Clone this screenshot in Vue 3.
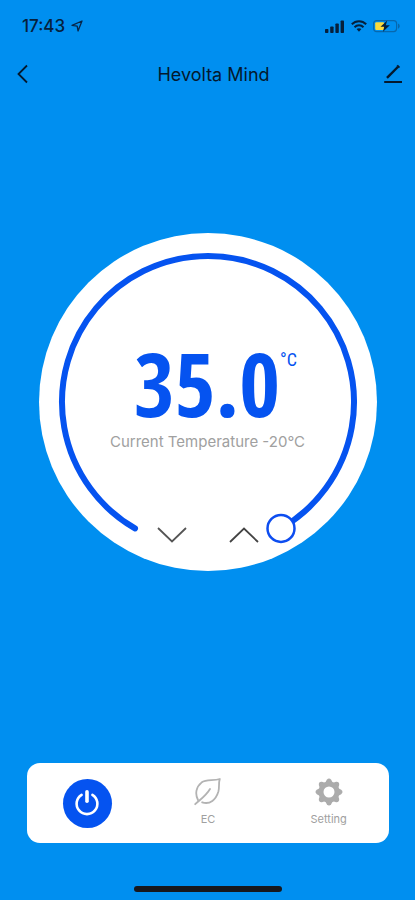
<template>
  <div class="screen">
    <header>
      <div class="status">
        <div class="clock">
          <span>17:43</span>
          <svg width="12" height="12" viewBox="0 0 12 12">
            <path d="M1 5.4L11 1L7 11L6.2 6.2Z" fill="none" stroke="#06264a" stroke-width="1.3" stroke-linejoin="round" />
          </svg>
        </div>
        <div class="indicators">
          <svg width="20" height="13" viewBox="0 0 20 13" fill="#06203c">
            <rect x="0" y="9" width="3.4" height="4" rx="0.8" />
            <rect x="5.2" y="6.5" width="3.4" height="6.5" rx="0.8" />
            <rect x="10.4" y="3.5" width="3.4" height="9.5" rx="0.8" />
            <rect x="15.6" y="0.5" width="3.4" height="12.5" rx="0.8" />
          </svg>
          <svg width="16" height="12" viewBox="0 0 16 12" fill="none" stroke="#06203c" stroke-width="2">
            <path d="M0.8 4.3C4.8 0.2 11.2 0.2 15.2 4.3" />
            <path d="M3.5 7.2C6 4.7 10 4.7 12.5 7.2" />
            <path d="M5.6 9.1C7 7.9 9 7.9 10.4 9.1L8 11.7Z" fill="#06203c" stroke="none" />
          </svg>
          <svg width="28" height="14" viewBox="0 0 28 14">
            <rect x="0.6" y="1.6" width="23" height="11" rx="3" fill="none" stroke="#0768ae" stroke-width="1.2" />
            <path d="M25 4.5C27.3 5.5 27.3 8.7 25 9.7Z" fill="#0768ae" />
            <rect x="2.2" y="3.2" width="9" height="7.8" rx="1.2" fill="#fbdc3d" />
            <path d="M14.2 1.5L7.5 7.8H11.2L10 12.8L16.8 6.3H12.8Z" fill="#06203c" />
          </svg>
        </div>
      </div>
      <nav>
        <button type="button" class="back" aria-label="Back">
          <svg width="14" height="20" viewBox="0 0 14 20">
            <path d="M11 1.5L2.5 10L11 18.5" fill="none" stroke="#04192e" stroke-width="1.8" />
          </svg>
        </button>
        <h1>Hevolta Mind</h1>
        <button type="button" aria-label="Edit">
          <svg width="20" height="20" viewBox="0 0 20 20" fill="none" stroke="#04192e">
            <path d="M4 13.8L14.8 3" stroke-width="2.4" />
            <path d="M14.6 3.2L16 1.8" stroke-width="3.2" />
            <path d="M1.2 18H19" stroke-width="2" />
          </svg>
        </button>
      </nav>
    </header>

    <main>
      <div class="dial">
        <svg class="ring" viewBox="0 0 338 338">
          <circle cx="169" cy="169" r="169" fill="#fff" />
          <path :d="arc" fill="none" stroke="#0553f0" stroke-width="6" stroke-linecap="round" />
          <circle :cx="thumb.x" :cy="thumb.y" r="13.5" fill="#fff" stroke="#0d4df0" stroke-width="2.5" />
        </svg>
        <input v-model.number="target" class="slider" type="range" :min="MIN" :max="MAX" step="0.5" aria-label="Target temperature">
        <div class="reading">
          <div class="target">
            <span class="value">{{ target.toFixed(1) }}</span>
            <span class="unit">°C</span>
          </div>
          <p>Current Temperature -20°C</p>
          <div class="steps">
            <button type="button" aria-label="Lower" @click="step(-0.5)">
              <svg width="30" height="16" viewBox="0 0 30 16">
                <path d="M1 1L15 14.5L29 1" fill="none" stroke="#555" stroke-width="1.8" />
              </svg>
            </button>
            <button type="button" aria-label="Raise" @click="step(0.5)">
              <svg width="30" height="16" viewBox="0 0 30 16">
                <path d="M1 15L15 1.5L29 15" fill="none" stroke="#444" stroke-width="1.8" />
              </svg>
            </button>
          </div>
        </div>
      </div>
    </main>

    <footer>
      <div class="actions">
        <button type="button" aria-label="Power">
          <span class="power">
            <svg width="26" height="26" viewBox="0 0 26 26" fill="none" stroke="#fff" stroke-linecap="round">
              <path d="M7.6 4.8A10.4 10.4 0 1 0 18.4 4.8" stroke-width="2.6" />
              <path d="M13 1.8V11.2" stroke-width="3.6" />
            </svg>
          </span>
        </button>
        <button type="button" class="labelled">
          <svg width="28" height="28" viewBox="0 0 28 28" fill="none" stroke="#b3b3b3" stroke-width="1.8" stroke-linecap="round" stroke-linejoin="round">
            <path d="M4 22C0.8 16 2 9 7.5 4.6C12.5 1 19 3.2 25.8 1C24.4 5 25.6 9 24.4 13.5C22 21.5 16 27 8.2 24.3" />
            <path d="M1.2 26.2C6 21.5 11.5 18.5 16 11" />
          </svg>
          <span>EC</span>
        </button>
        <button type="button" class="labelled">
          <svg width="28" height="28" viewBox="-14 -14 28 28">
            <g fill="#acacac">
              <path v-for="n in 8" :key="n" d="M-4.4 -8L-2.2 -12.2Q0 -14.8 2.2 -12.2L4.4 -8Z" :transform="`rotate(${n * 45})`" />
            </g>
            <circle r="8" fill="#fff" stroke="#acacac" stroke-width="5" />
          </svg>
          <span>Setting</span>
        </button>
      </div>
      <div class="home"></div>
    </footer>
  </div>
</template>

<script setup>
import { ref, computed } from 'vue';

const MIN = 5;
const MAX = 35;
const CENTER = 169;
const RADIUS = 146;

const target = ref(35);

// the ring runs from 210deg to 510deg, clockwise from the top
const point = (deg) => {
  const rad = (deg * Math.PI) / 180;
  return {
    x: CENTER + RADIUS * Math.sin(rad),
    y: CENTER - RADIUS * Math.cos(rad),
  };
};

const sweep = computed(() => ((target.value - MIN) / (MAX - MIN)) * 300);
const thumb = computed(() => point(210 + sweep.value));
const arc = computed(() => {
  const start = point(210);
  const large = sweep.value > 180 ? 1 : 0;
  return `M${start.x} ${start.y}A${RADIUS} ${RADIUS} 0 ${large} 1 ${thumb.value.x} ${thumb.value.y}`;
});

const step = (amount) => {
  target.value = Math.min(MAX, Math.max(MIN, target.value + amount));
};
</script>

<style>
body {
  background: #008ff0;
}
</style>

<style scoped>
.screen {
  display: flex;
  flex-direction: column;
  min-height: 100vh;
  background: #008ff0;
  font-family: Inter, "Liberation Sans", sans-serif;
}
button {
  padding: 0;
  border: 0;
  background: none;
  font: inherit;
  cursor: pointer;
}
svg {
  display: block;
}
.status {
  display: flex;
  justify-content: space-between;
  align-items: center;
  height: 52px;
  padding: 0 14px 0 22px;
  color: #06203c;
}
.clock,
.indicators {
  display: flex;
  align-items: center;
  gap: 6px;
}
.clock {
  font-size: 17px;
  font-weight: 500;
}
nav {
  display: flex;
  justify-content: space-between;
  align-items: center;
  height: 44px;
  padding: 0 12px 0 16px;
}
.back {
  width: 28px;
}
h1 {
  margin: 0;
  color: #04192e;
  font-size: 18px;
  font-weight: 400;
}
main {
  display: flex;
  flex: 1;
  justify-content: center;
  align-items: center;
  padding: 0 38px 56px;
}
.dial {
  display: grid;
  width: 100%;
  max-width: 338px;
}
.ring,
.slider,
.reading {
  grid-area: 1 / 1;
}
.ring {
  width: 100%;
}
.slider {
  width: 1px;
  height: 1px;
  margin: 0;
  opacity: 0;
}
.reading {
  display: flex;
  flex-direction: column;
  align-items: center;
  padding-top: 110px;
}
.target {
  display: flex;
  padding: 0 0 6px 16px;
  color: #0553f0;
}
.value {
  font-family: "Open Sans Condensed", "Roboto Condensed", sans-serif;
  font-size: 88px;
  font-weight: 700;
  line-height: 81px;
}
.unit {
  font-family: "Roboto Condensed", Roboto, sans-serif;
  font-size: 18px;
  line-height: 34px;
}
p {
  margin: 0;
  color: #a0a0a0;
  font-size: 15px;
  font-weight: 400;
  line-height: 24px;
}
.steps {
  display: flex;
  gap: 42px;
  padding-top: 73px;
}
footer {
  display: flex;
  flex-direction: column;
  align-items: center;
  gap: 43px;
  padding: 0 26px 8px 27px;
}
.actions {
  display: grid;
  grid-template-columns: repeat(3, 1fr);
  width: 100%;
  height: 80px;
  border-radius: 13px;
  background: #fff;
}
.actions button {
  display: flex;
  flex-direction: column;
  justify-content: center;
  align-items: center;
  gap: 6px;
  color: #a0a0a0;
  font-size: 11px;
  line-height: 14px;
}
.actions .labelled {
  padding-bottom: 2px;
}
.power {
  display: flex;
  justify-content: center;
  align-items: center;
  width: 49px;
  height: 49px;
  border-radius: 50%;
  background: #0553f0;
}
.home {
  width: 148px;
  height: 6px;
  border-radius: 3px;
  background: #17171c;
}
</style>
